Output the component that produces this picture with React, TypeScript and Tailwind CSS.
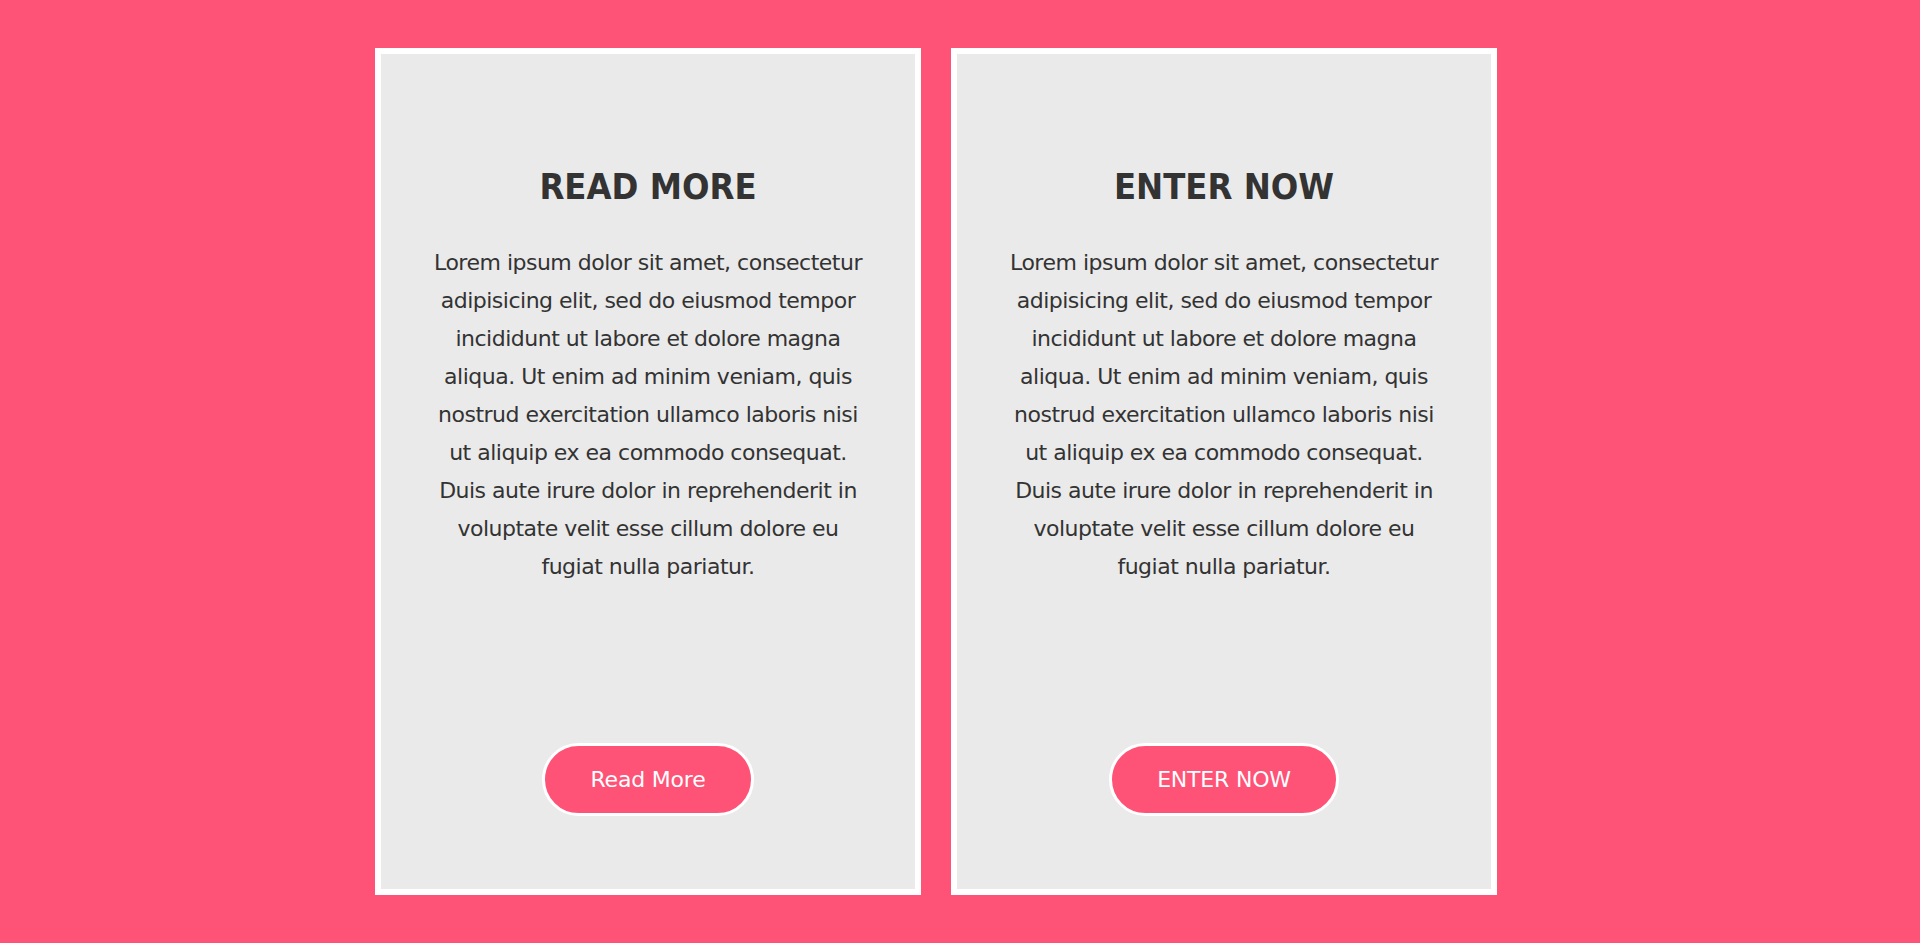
import React from "react";

const BODY = [
  "Lorem ipsum dolor sit amet, consectetur",
  "adipisicing elit, sed do eiusmod tempor",
  "incididunt ut labore et dolore magna",
  "aliqua. Ut enim ad minim veniam, quis",
  "nostrud exercitation ullamco laboris nisi",
  "ut aliquip ex ea commodo consequat.",
  "Duis aute irure dolor in reprehenderit in",
  "voluptate velit esse cillum dolore eu",
  "fugiat nulla pariatur.",
];

function Card({ title, btn }: { title: string; btn: string }) {
  return (
    <div className="w-[546px] h-[847px] border-[6px] border-white bg-[#eaeaea] flex flex-col items-center text-center text-[#333333]">
      <h2 className="mt-[111px] text-[36px] leading-[43px] font-bold font-stretch-condensed">{title}</h2>
      <p className="mt-[36px] text-[22px] leading-[38px] tracking-[-0.5px]">
        {BODY.map((l, i) => (
          <React.Fragment key={i}>
            {l}
            {i < BODY.length - 1 && <br />}
          </React.Fragment>
        ))}
      </p>
      <button className="mt-auto mb-[73px] h-[73px] px-[45px] rounded-full border-[3px] border-white bg-[#ff5277] text-white text-[22px] tracking-[-0.2px] flex items-center justify-center">
        {btn}
      </button>
    </div>
  );
}

export default function App() {
  return (
    <div className="min-h-screen w-full bg-[#ff5277] font-['DejaVu_Sans',sans-serif]">
      <div className="w-[1170px] mx-auto pt-[48px] pb-[48px] flex gap-[30px]">
        <Card title="READ MORE" btn="Read More" />
        <Card title="ENTER NOW" btn="ENTER NOW" />
      </div>
    </div>
  );
}
